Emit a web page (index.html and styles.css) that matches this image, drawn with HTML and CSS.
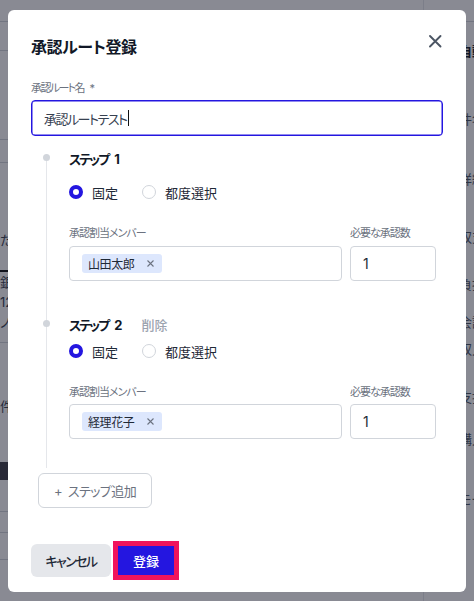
FILE: index.html
```html
<!DOCTYPE html>
<html lang="ja">
<head>
    <meta charset="UTF-8">
    <meta name="viewport" content="width=device-width, initial-scale=1.0">
    <title>承認ルート登録</title>
    <link rel="stylesheet" href="styles.css">
</head>
<body>
    <!-- page behind the dialog -->
    <div class="page">
        <div class="page-left">
            <div class="pl-row"></div>
            <div class="pl-row"></div>
            <div class="pl-row"></div>
            <div class="pl-row"></div>
            <div class="pl-row no-line"></div>
            <div class="pl-row heading">た口座一覧</div>
            <div class="pl-row no-line">銀行名</div>
            <div class="pl-row no-line">1234</div>
            <div class="pl-row">ノート</div>
            <div class="pl-row no-line"></div>
            <div class="pl-row no-line">件名</div>
            <div class="pl-row dark"></div>
            <div class="pl-row"></div>
            <div class="pl-row"></div>
            <div class="pl-row"></div>
            <div class="pl-row no-line"></div>
        </div>
        <div class="page-right">
            <div class="scroll-bar"></div>
            <div class="side-panel">
                <div class="sp-top"></div>
                <div class="sp-list">
                    <p class="sp-title">自動</p>
                    <p>件名</p>
                    <p>详細</p>
                    <p>収支</p>
                    <p>負担</p>
                    <p>会計</p>
                    <p>収入</p>
                    <p>支払</p>
                    <p>購入</p>
                    <p>モード</p>
                </div>
            </div>
        </div>
    </div>

    <div class="overlay"></div>

    <div class="modal">
        <div class="modal-head">
            <h2 class="modal-title">承認ルート登録</h2>
            <button type="button" class="close-btn" aria-label="閉じる">
                <svg width="16" height="16" viewBox="0 0 16 16"><path d="M3 3L13.5 13.5M13.5 3L3 13.5" stroke="#4b5563" stroke-width="1.9" stroke-linecap="round"/></svg>
            </button>
        </div>

        <label class="field-label route-label">承認ルート名 <span class="req">*</span></label>
        <div class="text-input">承認ルートテスト<span class="caret"></span></div>

        <div class="timeline">
            <div class="step">
                <div class="step-head">
                    <span class="step-title">ステップ <span class="step-no">1</span></span>
                </div>
                <div class="radio-row">
                    <span class="radio-option"><span class="radio checked"></span>固定</span>
                    <span class="radio-option"><span class="radio"></span>都度選択</span>
                </div>
                <div class="fields">
                    <div class="field members">
                        <label class="field-label">承認割当メンバー</label>
                        <div class="box-input">
                            <span class="chip">山田太郎<svg width="7" height="7" viewBox="0 0 7 7"><path d="M0.5 0.5L6.5 6.5M6.5 0.5L0.5 6.5" stroke="#6b7280" stroke-width="1.1"/></svg></span>
                        </div>
                    </div>
                    <div class="field count">
                        <label class="field-label">必要な承認数</label>
                        <div class="box-input">1</div>
                    </div>
                </div>
            </div>

            <div class="step">
                <div class="step-head">
                    <span class="step-title">ステップ <span class="step-no">2</span></span>
                    <button type="button" class="link-btn">削除</button>
                </div>
                <div class="radio-row">
                    <span class="radio-option"><span class="radio checked"></span>固定</span>
                    <span class="radio-option"><span class="radio"></span>都度選択</span>
                </div>
                <div class="fields">
                    <div class="field members">
                        <label class="field-label">承認割当メンバー</label>
                        <div class="box-input">
                            <span class="chip">経理花子<svg width="7" height="7" viewBox="0 0 7 7"><path d="M0.5 0.5L6.5 6.5M6.5 0.5L0.5 6.5" stroke="#6b7280" stroke-width="1.1"/></svg></span>
                        </div>
                    </div>
                    <div class="field count">
                        <label class="field-label">必要な承認数</label>
                        <div class="box-input">1</div>
                    </div>
                </div>
            </div>
        </div>

        <button type="button" class="add-step-btn"><span class="plus">+</span>ステップ追加</button>

        <div class="modal-foot">
            <button type="button" class="btn-cancel">キャンセル</button>
            <button type="button" class="btn-submit">登録</button>
        </div>
    </div>
</body>
</html>
```

FILE: styles.css
```css
* {
    box-sizing: border-box;
}
body {
    margin: 0;
    height: 601px;
    overflow: hidden;
    font-family: "Inter", "Noto Sans CJK JP", sans-serif;
    font-feature-settings: "palt";
    color: #111827;
    background-color: #ffffff;
}
button {
    font-family: inherit;
    font-feature-settings: inherit;
    cursor: pointer;
}

/* page behind the dialog */
.page {
    display: flex;
    justify-content: space-between;
    height: 601px;
}
.page-left {
    width: 60px;
    display: grid;
    grid-template-rows: 22px 29px 89px 23px 62px 47px 20px 20px 31px 53px 66px 18px 32px 21px 27px 41px;
    font-size: 13px;
    line-height: 16px;
    color: #374151;
    white-space: nowrap;
}
.pl-row {
    border-bottom: 1px solid #d1d5db;
    padding-top: 2px;
}
.pl-row.no-line {
    border-bottom: none;
}
.pl-row.heading {
    padding-top: 7px;
    border-bottom: 2px solid #111111;
}
.pl-row.dark {
    background-color: #3c3d47;
    border-bottom: none;
}
.page-right {
    width: 61px;
    display: flex;
}
.scroll-bar {
    width: 8px;
    background-color: #2e2f38;
}
.side-panel {
    flex: 1;
    margin-left: 10px;
    border-left: 1px solid #e5e7eb;
}
.sp-top {
    height: 22px;
    border-bottom: 1px solid #d1d5db;
}
.sp-list {
    padding-left: 35px;
    display: grid;
    grid-template-rows: 68px 60px 58px 47px 38px 27px 48px 42px 60px 16px;
    padding-top: 21px;
}
.sp-list p {
    margin: 0;
    font-size: 13px;
    line-height: 16px;
    color: #4b5563;
    white-space: nowrap;
}
.sp-list .sp-title {
    font-weight: 700;
    color: #111827;
}

.overlay {
    position: fixed;
    inset: 0;
    background-color: rgba(20, 22, 40, 0.5);
}

/* dialog */
.modal {
    position: fixed;
    left: 8px;
    top: 10px;
    width: 458px;
    height: 582px;
    background-color: #ffffff;
    border-radius: 6px;
    padding: 25px 23px 15px 23px;
    display: flex;
    flex-direction: column;
}
.modal-head {
    display: flex;
    justify-content: space-between;
    align-items: flex-start;
    margin-bottom: 21px;
}
.modal-title {
    margin: 0;
    font-size: 16px;
    line-height: 24px;
    font-weight: 700;
    letter-spacing: -0.4px;
    color: #111827;
}
.close-btn {
    width: 16px;
    height: 16px;
    margin-top: -2px;
    padding: 0;
    border: none;
    background: none;
}
.close-btn svg {
    display: block;
}
.field-label {
    display: block;
    font-size: 11px;
    line-height: 16px;
    letter-spacing: -1px;
    color: #6b7280;
    margin-bottom: 4px;
}
.route-label {
    letter-spacing: -1.6px;
}
.req {
    margin-left: 4px;
    letter-spacing: 0;
}
.text-input {
    height: 36px;
    border: 1px solid #2416e0;
    box-shadow: inset 0 0 0 0.5px #2416e0;
    border-radius: 4px;
    padding: 0 12px;
    display: flex;
    align-items: center;
    font-size: 13px;
    letter-spacing: -1.5px;
    color: #374151;
}
.caret {
    display: inline-block;
    width: 1px;
    height: 16px;
    margin-left: 2px;
    background-color: #111111;
}

/* steps */
.timeline {
    margin-top: 22px;
    margin-left: 15px;
    border-left: 1px solid #e5e7eb;
    padding: 0 7px 29px 22px;
}
.step:first-child .step-head {
    margin-top: -10px;
}
.step + .step {
    margin-top: 33px;
}
.step-head {
    position: relative;
    display: flex;
    align-items: center;
    gap: 19px;
    height: 20px;
}
.step-head::before {
    content: "";
    position: absolute;
    left: -26px;
    top: 6px;
    width: 7px;
    height: 7px;
    border-radius: 50%;
    background-color: #d1d5db;
}
.step-title {
    font-size: 13px;
    font-weight: 700;
    letter-spacing: -2px;
    color: #111827;
}
.step-no {
    margin-left: 5px;
    letter-spacing: 0;
}
.link-btn {
    padding: 0;
    border: none;
    background: none;
    font-size: 13px;
    font-weight: 500;
    color: #9ca3af;
}
.radio-row {
    display: flex;
    align-items: center;
    gap: 24px;
    height: 20px;
    margin-top: 7px;
    font-size: 13px;
    color: #1f2937;
}
.step:first-child .radio-row {
    margin-top: 14px;
}
.radio-option {
    display: flex;
    align-items: center;
    gap: 9px;
}
.radio {
    width: 14px;
    height: 14px;
    border-radius: 50%;
    border: 1px solid #d1d5db;
    background-color: #ffffff;
}
.radio.checked {
    border: 4px solid #2416e0;
}
.fields {
    display: flex;
    gap: 8px;
    margin-top: 23px;
}
.field .field-label {
    margin-bottom: 5px;
}
.step + .step .field .field-label {
    margin-bottom: 4px;
}
.field.members {
    flex: 1;
}
.field.count {
    width: 86px;
}
.box-input {
    height: 35px;
    border: 1px solid #d1d5db;
    border-radius: 4px;
    padding: 0 12px;
    display: flex;
    align-items: center;
    font-size: 14px;
    color: #1f2937;
}
.chip {
    display: inline-flex;
    align-items: center;
    gap: 13px;
    height: 19px;
    padding: 0 8px 0 6px;
    border-radius: 3px;
    background-color: #dde7fd;
    font-size: 12px;
    letter-spacing: -0.4px;
    color: #1f2937;
}

.add-step-btn {
    align-self: flex-start;
    width: 114px;
    height: 35px;
    margin: 5px 0 0 7px;
    border: 1px solid #d1d5db;
    border-radius: 6px;
    background-color: #ffffff;
    font-size: 13px;
    letter-spacing: -0.6px;
    color: #6b7280;
}
.plus {
    margin-right: 6px;
}

.modal-foot {
    margin-top: auto;
    display: flex;
    gap: 5px;
}
.btn-cancel {
    width: 80px;
    height: 33px;
    border: none;
    border-radius: 6px;
    background-color: #e5e7eb;
    font-size: 13px;
    font-weight: 500;
    letter-spacing: -1.6px;
    color: #1f2937;
}
.btn-submit {
    width: 60px;
    height: 33px;
    border: 2px solid #f0145c;
    outline: 3px solid #f0145c;
    background-color: #2416e0;
    font-size: 13px;
    font-weight: 500;
    color: #ffffff;
}
```
